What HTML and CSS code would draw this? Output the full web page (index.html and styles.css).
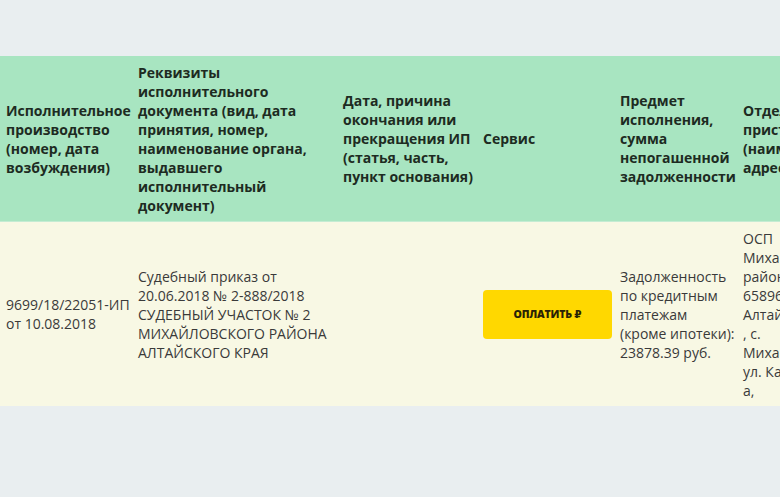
FILE: index.html
```html
<!DOCTYPE html>
<html lang="ru">
<head>
<meta charset="utf-8">
<title>Исполнительные производства</title>
<link rel="stylesheet" href="styles.css">
</head>
<body>
<div class="page">
  <table class="ip-table">
    <colgroup>
      <col class="c1"><col class="c2"><col class="c3"><col class="c4"><col class="c5"><col class="c6">
    </colgroup>
    <thead>
      <tr>
        <th>Исполнительное производство (номер, дата возбуждения)</th>
        <th>Реквизиты исполнительного документа (вид, дата принятия, номер, наименование органа, выдавшего исполнительный документ)</th>
        <th>Дата, причина окончания или прекращения ИП (статья, часть, пункт основания)</th>
        <th>Сервис</th>
        <th>Предмет исполнения, сумма непогашенной задолженности</th>
        <th>Отдел судебных приставов (наименование, адрес)</th>
      </tr>
    </thead>
    <tbody>
      <tr>
        <td>9699/18/22051-ИП от 10.08.2018</td>
        <td>Судебный приказ от 20.06.2018 № 2-888/2018 СУДЕБНЫЙ УЧАСТОК № 2 МИХАЙЛОВСКОГО РАЙОНА АЛТАЙСКОГО КРАЯ</td>
        <td></td>
        <td><a class="pay-btn" href="#">ОПЛАТИТЬ&nbsp;₽</a></td>
        <td>Задолженность по кредитным платежам (кроме ипотеки): 23878.39 руб.</td>
        <td>ОСП<br>Михайловского<br>района<br>658960,<br>Алтайский край<br>, с.<br>Михайловское<br>ул. Калинина,<br>а,</td>
      </tr>
    </tbody>
  </table>
</div>
</body>
</html>
```

FILE: styles.css
```css
html, body {
  margin: 0;
  padding: 0;
  background: #e9eef0;
  overflow: hidden;
}
body {
  width: 780px;
  height: 497px;
  font-family: "Open Sans", "DejaVu Sans", sans-serif;
}
.page {
  padding-top: 56px;
}
.ip-table {
  border-collapse: collapse;
  table-layout: fixed;
  width: 870px;
  font-size: 14px;
  line-height: 19px;
}
.c1 { width: 132px; }
.c2 { width: 205px; }
.c3 { width: 140px; }
.c4 { width: 137px; }
.c5 { width: 123px; }
.c6 { width: 133px; }
.ip-table th,
.ip-table td {
  padding: 6px 2px 6px 6px;
  text-align: left;
  vertical-align: middle;
}
.ip-table thead th {
  background: #a8e5c1;
  color: #1d2b22;
  font-weight: 700;
  height: 153px;
  border-bottom: 1px solid #c4ecd3;
}
.ip-table tbody td {
  background: #f8f8e4;
  color: #3a3a3a;
  font-weight: 400;
  height: 172px;
}
.pay-btn {
  display: flex;
  align-items: center;
  justify-content: center;
  width: 129px;
  height: 49px;
  background: #ffd800;
  border-radius: 4px;
  color: #2a2205;
  font-size: 10.5px;
  font-weight: 800;
  letter-spacing: -0.2px;
  text-decoration: none;
}
```
